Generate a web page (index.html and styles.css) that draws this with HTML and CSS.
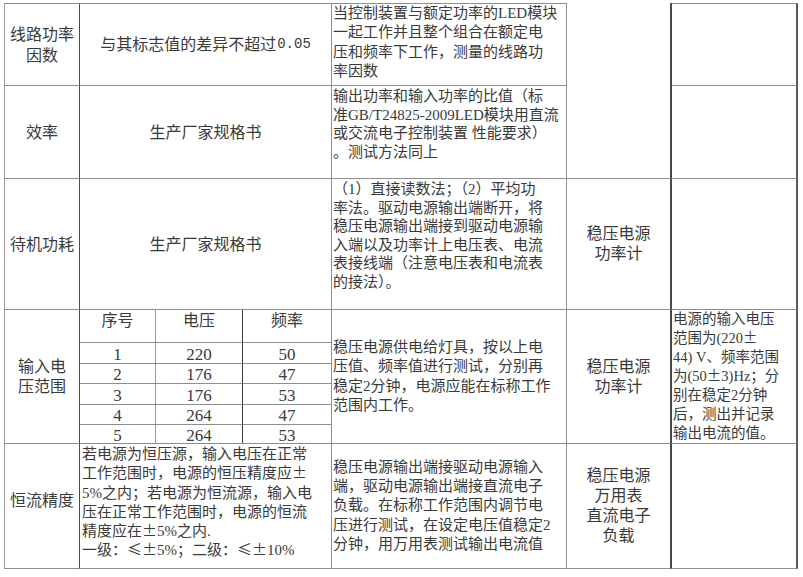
FILE: index.html
```html
<!DOCTYPE html>
<html lang="zh-CN">
<head>
<meta charset="utf-8">
<title>LED驱动电源测试项目</title>
<link rel="stylesheet" href="styles.css">
</head>
<body>
<div class="sheet">
  <!-- row 1 -->
  <div class="c top first c1 center lh21">线路功率<br>因数</div>
  <div class="c top center">与其标志值的差异不超过<span class="mono">0.05</span></div>
  <div class="c top text lh19">当控制装置与额定功率的LED模块<br>一起工作并且整个组合在额定电<br>压和频率下工作，测量的线路功<br>率因数</div>
  <div class="c c4 merged"></div>
  <div class="c top c5"></div>

  <!-- row 2 -->
  <div class="c first c1 center">效率</div>
  <div class="c center">生产厂家规格书</div>
  <div class="c text lh18 pt1">输出功率和输入功率的比值（标<br>准GB/T24825-2009LED模块用直流<br>或交流电子控制装置 性能要求）<br>。测试方法同上</div>
  <div class="c c5"></div>

  <!-- row 3 -->
  <div class="c first c1 center">待机功耗</div>
  <div class="c center">生产厂家规格书</div>
  <div class="c text lh18 pt1">（1）直接读数法；（2）平均功<br>率法。驱动电源输出端断开，将<br>稳压电源输出端接到驱动电源输<br>入端以及功率计上电压表、电流<br>表接线端（注意电压表和电流表<br>的接法）。</div>
  <div class="c c4 center lh20">稳压电源<br>功率计</div>
  <div class="c c5"></div>

  <!-- row 4 -->
  <div class="c first c1 center lh20">输入电<br>压范围</div>
  <div class="c nopad">
    <div class="inner">
      <div class="ic head">序号</div>
      <div class="ic head dark">电压</div>
      <div class="ic head last">频率</div>
      <div class="ic num">1</div>
      <div class="ic num dark">220</div>
      <div class="ic num last">50</div>
      <div class="ic num">2</div>
      <div class="ic num dark">176</div>
      <div class="ic num last">47</div>
      <div class="ic num">3</div>
      <div class="ic num dark">176</div>
      <div class="ic num last">53</div>
      <div class="ic num">4</div>
      <div class="ic num dark">264</div>
      <div class="ic num last">47</div>
      <div class="ic num bottom">5</div>
      <div class="ic num dark bottom">264</div>
      <div class="ic num last bottom">53</div>
    </div>
  </div>
  <div class="c text vmid lh19">稳压电源供电给灯具，按以上电<br>压值、频率值进行测试，分别再<br>稳定2分钟，电源应能在标称工作<br>范围内工作。</div>
  <div class="c c4 center lh20">稳压电源<br>功率计</div>
  <div class="c c5 text small lh-col5">电源的输入电压<br>范围为(220<span class="sym">±</span><br>44) V、频率范围<br>为(50<span class="sym">±</span>3)Hz；分<br>别在稳定2分钟<br>后，测出并记录<br>输出电流的值。</div>

  <!-- row 5 -->
  <div class="c first c1 center lowered">恒流精度</div>
  <div class="c text2 lh19 pt1">若电源为恒压源，输入电压在正常<br>工作范围时，电源的恒压精度应<span class="sym">±</span><br>5%之内；若电源为恒流源，输入电<br>压在正常工作范围时，电源的恒流<br>精度应在<span class="sym">±</span>5%之内.<br>一级：<span class="sym">≤</span><span class="sym">±</span>5%；二级：<span class="sym">≤</span><span class="sym">±</span>10%</div>
  <div class="c text vmid lh19">稳压电源输出端接驱动电源输入<br>端，驱动电源输出端接直流电子<br>负载。在标称工作范围内调节电<br>压进行测试，在设定电压值稳定2<br>分钟，用万用表测试输出电流值</div>
  <div class="c c4 center lh20">稳压电源<br>万用表<br>直流电子<br>负载</div>
  <div class="c c5"></div>
</div>
</body>
</html>
```

FILE: styles.css
```css
body {
  margin: 0;
  background: #ffffff;
  font-family: "Liberation Serif", "Noto Sans CJK SC", serif;
  font-size: 15px;
  color: #3a3a3a;
}

.sheet {
  display: grid;
  grid-template-columns: 76px 252px 235px 105px 126px;
  grid-template-rows: 83px 93px 131px 134px 125px;
  margin: 3px 0 0 4px;
  width: max-content;
}

.c {
  box-sizing: border-box;
  border-right: 1px solid #8e8e8e;
  border-bottom: 1px solid #8e8e8e;
  overflow: hidden;
  white-space: nowrap;
  line-height: 19px;
}

.top { border-top: 1px solid #8e8e8e; }
.first { border-left: 1px solid #9a9a9a; }
.c1 { border-right-color: #4c4c4c; }
.c4 { border-right: 2px solid #4a4a4a; }
.c5 { border-right: 2px solid #5a5a5a; }

.merged {
  grid-row: span 2;
}

.center {
  display: flex;
  align-items: center;
  justify-content: center;
  text-align: center;
  font-size: 16px;
}

.mono {
  font-family: "Liberation Mono", monospace;
  font-size: 14px;
  margin-left: 1px;
}

.sym {
  display: inline-block;
  width: 1em;
  line-height: 1;
  text-align: center;
  font-family: "Noto Sans CJK SC", sans-serif;
}

.lowered { padding-bottom: 12px; }

.text {
  padding-left: 1px;
}

.text2 {
  padding-left: 2px;
}

.small { font-size: 14.5px; }

.pt1 { padding-top: 1px; }

.vmid {
  display: flex;
  align-items: center;
}

.lh18 { line-height: 18.5px; }
.lh19 { line-height: 19.3px; }
.lh20 { line-height: 20px; }
.lh21 { line-height: 21px; }
.lh-col5 { line-height: 19px; }

.nopad { padding: 0; }

.inner {
  display: grid;
  grid-template-columns: 76px 87px 88px;
  grid-template-rows: 33px 21px 20px 21px 20px 18px;
}

.ic {
  box-sizing: border-box;
  border-right: 1px solid #9a9a9a;
  border-bottom: 1px solid #8e8e8e;
  text-align: center;
  line-height: 19px;
}

.ic.dark { border-right-color: #3e3e3e; }
.ic.last { border-right: none; }
.ic.bottom { border-bottom: none; }

.head {
  padding-top: 1px;
  font-size: 16px;
}

.num {
  display: flex;
  align-items: center;
  justify-content: center;
  padding-top: 2px;
  font-size: 17px;
}
```
